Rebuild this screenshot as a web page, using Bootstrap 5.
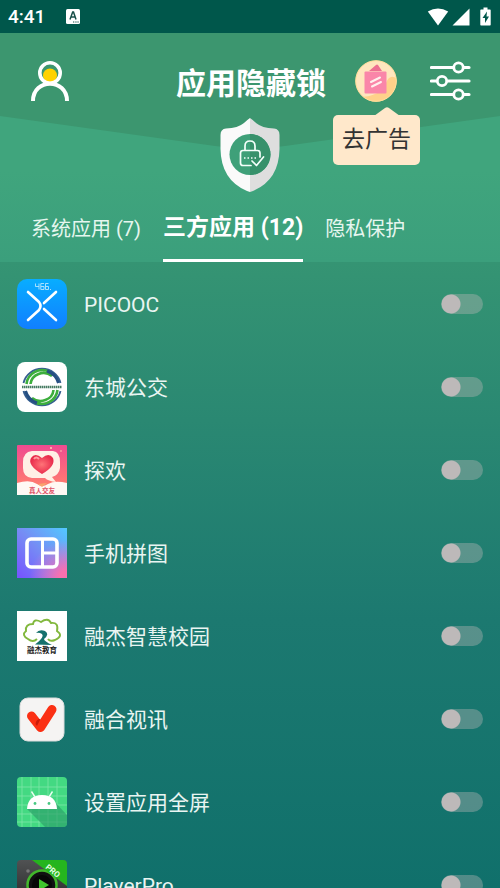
<!DOCTYPE html>
<html lang="zh-CN">
<head>
<meta charset="utf-8">
<meta name="viewport" content="width=device-width, initial-scale=1">
<title>应用隐藏锁</title>
<link href="https://cdn.jsdelivr.net/npm/bootstrap@5.3.0/dist/css/bootstrap.min.css" rel="stylesheet">
<style>
body{font-family:Roboto,"Noto Sans CJK SC",sans-serif;background:#10706b}
.app-shell{background:linear-gradient(180deg,#3a9a73 0,#359473 262px,#2a8872 420px,#1c7970 620px,#10706b 100%)}
.status-bar{height:33px;padding:0 9px 0 8px;background:#00574b;font-size:19px;font-weight:500;line-height:33px}
.status-app{margin-left:21px}
.hero{background:linear-gradient(180deg,#40a57d 0,#40a57d 60%,#3b9f7c 100%)}
.hero-shade{height:117px;width:100%;top:0;left:0;color:#3c966f}
.top-bar{padding:27px 29px 0 31px;z-index:2}
.app-title{font-size:30px;line-height:36px;font-weight:700;padding-top:6px}
.right-tools{gap:33px}
.plain-btn{padding:0;border:0;background:none;line-height:0;color:#fff}
.promo-tip{top:47px;left:-22px;width:87px;color:#333;font-size:23px;line-height:50px;padding-top:8px}
.promo-tip span{background:#ffe8cb;border-radius:5px}
.promo-tip svg{top:0;left:41px}
.shield{margin-top:16px}
.tab-strip{height:70px;padding-left:31px;gap:22px}
.tab-strip .nav-link{padding:6px 0 0;font-size:20px;color:#e6f6ef;border-bottom:3px solid transparent}
.tab-strip .nav-link.active{font-size:23px;font-weight:700;color:#fff;border-color:#fff}
.app-list{scrollbar-width:none}
.app-list::-webkit-scrollbar{display:none}
.app-row{height:83px;padding:0 17px;gap:17px;font-size:21px;color:#e9f5f2}
.app-row label{padding-top:4px}
.app-row .form-check-input{width:42px;height:20px;border:0;border-radius:10px;background:radial-gradient(circle at 10px 10px,#bdb9b9 9px,transparent 10px) rgba(189,185,185,.38)}
.app-row .form-check-input:checked{background:radial-gradient(circle at 32px 10px,#fff 9px,transparent 10px) #40c090}
.app-icon{width:50px;height:50px}
</style>
<script src="https://cdn.jsdelivr.net/npm/bootstrap@5.3.0/dist/js/bootstrap.bundle.min.js"></script>
</head>
<body>
<div class="app-shell d-flex flex-column vh-100 overflow-hidden">
<div class="status-bar d-flex align-items-center text-white flex-shrink-0">
<span>4:41</span>
<svg class="status-app" width="14" height="15" viewBox="0 0 14 15" aria-hidden="true"><rect width="14" height="15" rx="1.5" fill="#fff"/><path d="M4 10.500 6.700 3h.8L10 10.500M5 8h4" fill="none" stroke="#174f48" stroke-width="1.500"/><path d="M7 13h1.300m1 0h1.300m.8 0h1.300" stroke="#174f48"/></svg>
<svg class="ms-auto" width="64" height="20" viewBox="0 0 64 20" fill="#fff" aria-hidden="true"><path d="M.8 4.400Q11 -1.500 21.200 4.400L11 18.500Z"/><path d="M42.500 1.500V18.500H25.500Z"/><path d="M56.500.5h4v2h2.500q.7 0 .7.700v14.600q0 .7-.7.700h-9q-.7 0-.7-.7V3.200q0-.7.700-.7h2.500z"/><path d="M60 4.500 55.500 11H58v5l4-6.500h-2.500z" fill="#00574b"/></svg>
</div>
<header class="hero position-relative text-white flex-shrink-0">
<svg class="hero-shade position-absolute" viewBox="0 0 500 117" preserveAspectRatio="none" aria-hidden="true"><path d="M0 0H500V83L285 113Q250 118 215 113L0 83Z" fill="currentColor"/></svg>
<div class="top-bar position-relative d-flex align-items-center">
<div class="col">
<button class="plain-btn" type="button" aria-label="个人中心"><svg width="38" height="40" viewBox="0 0 38 40" fill="none"><circle cx="19" cy="14.500" r="7" fill="#ffd200"/><circle cx="19" cy="12" r="10.200" stroke="#fff" stroke-width="3.600"/><path d="M2 40C2 17 36 17 36 40" stroke="#fff" stroke-width="4"/></svg></button>
</div>
<h1 class="app-title mb-0">应用隐藏锁</h1>
<div class="right-tools col d-flex align-items-center justify-content-end">
<div class="position-relative">
<button class="plain-btn d-block" type="button" aria-label="去广告"><svg width="42" height="42" viewBox="0 0 42 42"><defs><clipPath id="coinClip"><circle cx="21" cy="21" r="20.500"/></clipPath></defs><circle cx="21" cy="21" r="20.500" fill="#ffe6be"/><path d="M0 37Q25 38 31 23 35 13 42 19V42H0Z" fill="#ffd18a" clip-path="url(#coinClip)"/><circle cx="21" cy="21" r="20.300" fill="none" stroke="#ffdd98"/><path d="M14 11 21 5Q22 4 23 5L27 11Z" fill="#ed6f91"/><rect x="9.500" y="11.500" width="22" height="22" rx="1" fill="#fa86a9"/><path d="M16 22 25 17.500M17 26.500 26 22" stroke="#fff0ed" stroke-width="2" stroke-linecap="round"/></svg></button>
<div class="promo-tip position-absolute text-center text-nowrap"><svg class="position-absolute" width="26" height="9" viewBox="0 0 26 9" aria-hidden="true"><path d="M0 9 11 1Q13-.5 15 1L26 9Z" fill="#ffe8cb"/></svg><span class="d-block">去广告</span></div>
</div>
<button class="plain-btn" type="button" aria-label="设置"><svg width="41" height="40" viewBox="0 0 41 40" fill="none" stroke="#fff"><path d="M1.500 6.500H23M34 6.500H39M1.500 20H6M18 20H39M1.500 33.500H23M34 33.500H39" stroke-width="3.200" stroke-linecap="round"/><circle cx="28.500" cy="6.500" r="4.700" stroke-width="2.800"/><circle cx="12" cy="20" r="4.700" stroke-width="2.800"/><circle cx="28.500" cy="33.500" r="4.700" stroke-width="2.800"/></svg></button>
</div>
</div>
<div class="shield position-relative d-flex justify-content-center">
<svg width="60" height="74" viewBox="0 0 60 74" aria-hidden="true"><path d="M30 0Q33 2 36 5 42 10 54 10.500 59.500 11 59.500 17V31Q59 62 33 73L30 74Z" fill="#dedede"/><path d="M30 0Q27 2 24 5 18 10 6 10.500 .5 11 .5 17V31Q1 62 27 73L30 74Z" fill="#fafafa"/><circle cx="30" cy="36.500" r="20.500" fill="#3fa079"/><path d="M30 16A20.500 20.500 0 0 1 30 57Z" fill="#37916b"/><path d="M25 32V28Q25 23 30 23T35 28V32M31 47.500H23Q20.500 47.500 20.500 45V35Q20.500 32.500 23 32.500H37.500Q40 32.500 40 35V39M32 43 36.500 47.500 43.500 39" fill="none" stroke="#f5fffb" stroke-width="1.700" stroke-linecap="round" stroke-linejoin="round"/><path d="M24 40h1.500m2 0h1.500m2 0h1.500m2 0h1.500" stroke="#f5fffb" stroke-width="1.500"/></svg>
</div>
<nav class="tab-strip nav flex-nowrap text-nowrap" aria-label="应用分类">
<a class="nav-link d-flex align-items-center" href="#system">系统应用 (7)</a>
<a class="nav-link active d-flex align-items-center" href="#third" aria-current="page">三方应用 (12)</a>
<a class="nav-link d-flex align-items-center" href="#privacy">隐私保护</a>
</nav>
</header>
<main class="app-list flex-grow-1 overflow-auto" id="third">
<div class="app-row d-flex align-items-center">
<svg class="app-icon" viewBox="0 0 50 50" aria-hidden="true"><defs><linearGradient id="pic" x2="0" y2="1"><stop stop-color="#08adff"/><stop offset="1" stop-color="#117fff"/></linearGradient></defs><rect width="50" height="50" rx="10" fill="url(#pic)"/><path d="M11 13 22 23Q25 27 22 31L11 41M39 13 27 24M27 30 39 41" fill="none" stroke="#fff" stroke-width="2.600" stroke-linecap="round"/><path d="M18.500 4.500V7.500H22M22 4.500V10.500M27 4.500H23.800V10.500H27V7.500H23.800M31.500 4.500H28.500V10.500H31.500V7.500H28.500M33 10.500h1" fill="none" stroke="#b7e6ff" stroke-width=".9"/></svg>
<label class="flex-grow-1" for="s1">PICOOC</label><input class="form-check-input m-0" type="checkbox" role="switch" id="s1">
</div>
<div class="app-row d-flex align-items-center">
<svg class="app-icon" viewBox="0 0 50 50" aria-hidden="true"><rect width="50" height="50" rx="8" fill="#fff"/><g fill="none"><path d="M6.500 21A19 18.500 0 0 1 43.500 21" stroke="#365f91" stroke-width="1.800"/><path d="M6.500 29A19 18.500 0 0 0 43.500 29" stroke="#365f91" stroke-width="1.800"/><path d="M9.500 22A16 15.500 0 0 1 32 9.500M13.500 22A13 12 0 0 1 35 14" stroke="#3cae3c" stroke-width="2.600"/><path d="M40.500 28A16 15.500 0 0 1 18 40.500M36.500 28A13 12 0 0 1 15 36" stroke="#3cae3c" stroke-width="2.600"/><path d="M30 9Q39 12 41.500 21M20 41Q11 38 8.500 29" stroke="#254f82" stroke-width="3"/><path d="M5 25H45" stroke="#477c63" stroke-width="2.500" stroke-dasharray="1.500 .5"/></g></svg>
<label class="flex-grow-1" for="s2">东城公交</label><input class="form-check-input m-0" type="checkbox" role="switch" id="s2">
</div>
<div class="app-row d-flex align-items-center">
<svg class="app-icon" viewBox="0 0 50 50" aria-hidden="true"><defs><linearGradient id="love" x2="0" y2="1"><stop stop-color="#ef4b91"/><stop offset=".8" stop-color="#ff7b70"/></linearGradient><radialGradient id="heart"><stop stop-color="#ff7478"/><stop offset="1" stop-color="#e92c4c"/></radialGradient></defs><rect width="50" height="50" rx="1" fill="url(#love)"/><path d="M0 38Q13 34 20 39 25 43 31 39 38 35 50 38V50H0Z" fill="#fff8f4"/><path d="M21 39 25 42 30 38Z" fill="#f8a56e"/><path d="M15 6H36Q43 7 43 17V23Q42 30 35 32L39 37Q31 36 28 33H15Q6 32 6 23V17Q6 7 15 6Z" fill="#fff0e5"/><path d="M25 29Q10 20 14 13 18 7 25 13 32 7 36 13 39 21 25 29Z" fill="url(#heart)"/><path d="M17 14Q19 11 22 14" stroke="#ff9da0" stroke-width="2" fill="none"/><circle cx="34" cy="3" r="1" fill="#ffd2b3"/><circle cx="44" cy="6" r=".8" fill="#ffd2b3"/><text x="25" y="48" text-anchor="middle" font-size="6.500" font-weight="700" fill="#df5368">真人交友</text></svg>
<label class="flex-grow-1" for="s3">探欢</label><input class="form-check-input m-0" type="checkbox" role="switch" id="s3">
</div>
<div class="app-row d-flex align-items-center">
<svg class="app-icon" viewBox="0 0 50 50" aria-hidden="true"><defs><linearGradient id="puz" y1="1" x2="1" y2="0"><stop stop-color="#7652ff"/><stop offset=".5" stop-color="#768cf4"/><stop offset="1" stop-color="#52c9ff"/></linearGradient><radialGradient id="pink" cx="1" cy="1" r=".75"><stop offset=".2" stop-color="#fa70ae"/><stop offset="1" stop-color="#ed70cc" stop-opacity="0"/></radialGradient></defs><rect width="50" height="50" fill="url(#puz)"/><rect width="50" height="50" fill="url(#pink)"/><rect x="10" y="11" width="30" height="28" rx="4" fill="none" stroke="#fff" stroke-width="3.600"/><path d="M25.500 11V39M25.500 25H40" stroke="#fff" stroke-width="3"/></svg>
<label class="flex-grow-1" for="s4">手机拼图</label><input class="form-check-input m-0" type="checkbox" role="switch" id="s4">
</div>
<div class="app-row d-flex align-items-center">
<svg class="app-icon" viewBox="0 0 50 50" aria-hidden="true"><rect width="50" height="50" fill="#fff"/><path d="M20 28Q16 32 11 28 4 24 9 20 8 13 16 13 17 7 24 11 31 6 34 12 42 11 40 20 47 25 38 29 33 31 31 28" fill="none" stroke="#82b83e" stroke-width="1.900"/><path d="M19 22Q22 18 28 20 33 23 27 28 27 30 35 34L18 33.500Q28 26 25 23 22 21 19 22Z" fill="#14716c"/><text x="25" y="42" text-anchor="middle" font-size="7.500" font-weight="700" fill="#222">融杰教育</text></svg>
<label class="flex-grow-1" for="s5">融杰智慧校园</label><input class="form-check-input m-0" type="checkbox" role="switch" id="s5">
</div>
<div class="app-row d-flex align-items-center">
<svg class="app-icon" viewBox="0 0 50 50" aria-hidden="true"><rect x="3" y="4" width="44" height="43" rx="8" fill="#f5f4f3" stroke="#ddd"/><path d="M14.500 22 23.500 33.500 35 15.500" fill="none" stroke="#fb3014" stroke-width="9" stroke-linecap="round" stroke-linejoin="round"/><path d="M18.500 30Q19 25 23.500 25L20 32Z" fill="#ca1b0a"/></svg>
<label class="flex-grow-1" for="s6">融合视讯</label><input class="form-check-input m-0" type="checkbox" role="switch" id="s6">
</div>
<div class="app-row d-flex align-items-center">
<svg class="app-icon" viewBox="0 0 50 50" aria-hidden="true"><rect width="50" height="50" rx="4" fill="#43d982"/><path d="M5 0V50M14 0V50M22 0V50M31 0V50M40 0V50M0 10H50M0 19H50M0 28H50M0 37H50M0 45H50" stroke="#7ee6a8" stroke-width=".8"/><path d="M10 32 28 50H46Q50 50 50 46V38L36 23Z" fill="#2b9c68" opacity=".65"/><path d="M10 32Q11 18 25 18T40 32Z" fill="#fff"/><path d="M18 20 14.500 14.500M32 20 35.500 14.500" stroke="#eafff1" stroke-width="1.400"/><circle cx="18" cy="26.500" r="1.400" fill="#48c982"/><circle cx="32" cy="26.500" r="1.400" fill="#48c982"/></svg>
<label class="flex-grow-1" for="s7">设置应用全屏</label><input class="form-check-input m-0" type="checkbox" role="switch" id="s7">
</div>
<div class="app-row d-flex align-items-center">
<svg class="app-icon" viewBox="0 0 50 50" aria-hidden="true"><defs><linearGradient id="play" x2="0" y2="1"><stop stop-color="#505253"/><stop offset="1" stop-color="#222"/></linearGradient></defs><rect width="50" height="50" rx="4" fill="url(#play)"/><circle cx="11" cy="11" r="1.800" fill="#777"/><circle cx="25" cy="25" r="14.500" fill="#111" stroke="#42b82b" stroke-width="2.500"/><circle cx="25" cy="25" r="10" fill="#070807"/><path d="M22 19 32 25 22 31Z" fill="#40c52c"/><path d="M15 0H46Q50 0 50 4V26Z" fill="#25b51e"/><text x="28" y="8" transform="rotate(40 28 8)" font-size="8" font-weight="700" fill="#e4ffe1">PRO</text></svg>
<label class="flex-grow-1" for="s8">PlayerPro</label><input class="form-check-input m-0" type="checkbox" role="switch" id="s8">
</div>
</main>
</div>
</body>
</html>
